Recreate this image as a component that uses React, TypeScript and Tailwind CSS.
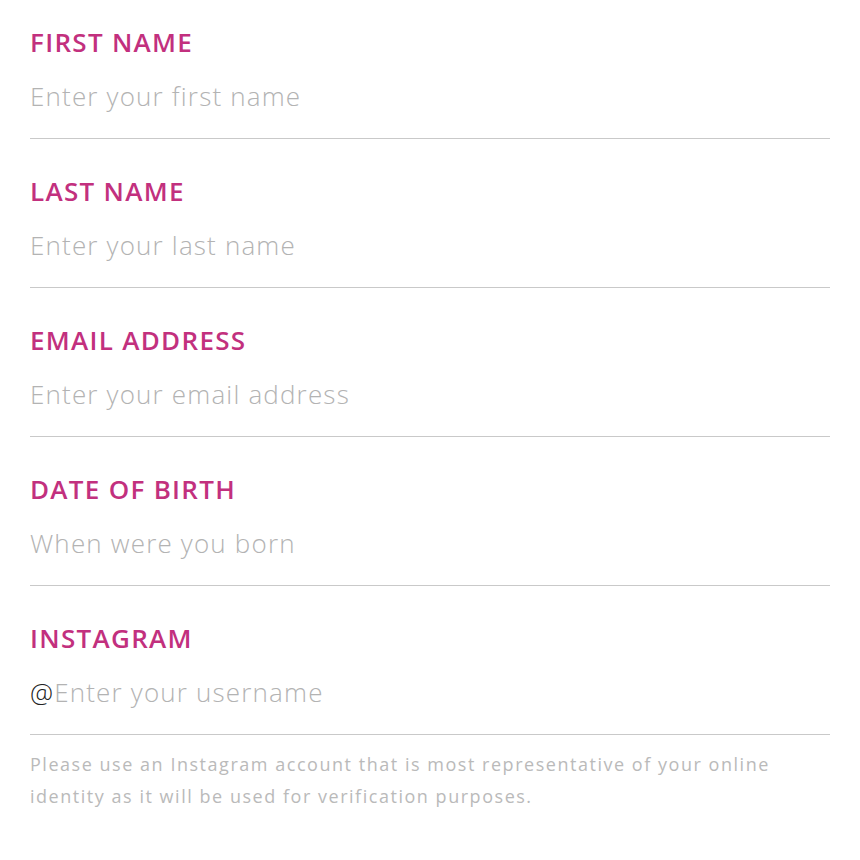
const fields = [
  { label: "FIRST NAME", placeholder: "Enter your first name" },
  { label: "LAST NAME", placeholder: "Enter your last name" },
  { label: "EMAIL ADDRESS", placeholder: "Enter your email address" },
  { label: "DATE OF BIRTH", placeholder: "When were you born" },
];

function Field({ label, placeholder, prefix }: { label: string; placeholder: string; prefix?: string }) {
  return (
    <div className="border-b border-[#c9c9c9] pb-[26px]">
      <div className="text-[26px] font-semibold leading-[28px] tracking-[0.05em] text-[#c2307e]">{label}</div>
      <div className="mt-[24px] flex text-[26px] font-light leading-[32px] tracking-[0.045em] text-[#b3b3b3]">
        {prefix && <span className="text-[#222]">{prefix}</span>}
        <span>{placeholder}</span>
      </div>
    </div>
  );
}

export default function App() {
  return (
    <div className="min-h-[860px] bg-white px-[30px] pt-[28px] font-['Open_Sans',sans-serif]">
      <div className="flex flex-col gap-[38px]">
        {fields.map((f) => (
          <Field key={f.label} label={f.label} placeholder={f.placeholder} />
        ))}
        <Field label="INSTAGRAM" placeholder="Enter your username" prefix="@" />
      </div>
      <p className="mt-[13px] text-[18px] leading-[32px] tracking-[0.085em] text-[#bababa]">
        Please use an Instagram account that is most representative of your online identity as it will be used for verification purposes.
      </p>
    </div>
  );
}
